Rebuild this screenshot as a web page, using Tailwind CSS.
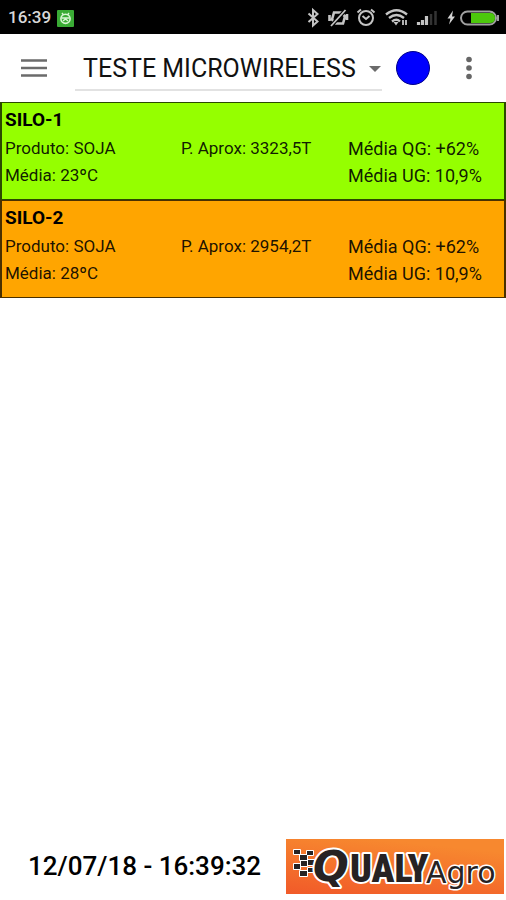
<!DOCTYPE html>
<html lang="pt-BR">
<head>
    <meta charset="UTF-8">
    <meta name="viewport" content="width=device-width, initial-scale=1.0">
    <title>QualyAgro - Silos</title>
    <script src="https://cdn.jsdelivr.net/npm/@tailwindcss/browser@4"></script>
</head>
<body class="bg-white text-black min-h-screen flex flex-col font-[Roboto,sans-serif]">
    <!-- Status bar -->
    <div class="bg-black h-[34px] flex items-center justify-between pl-2 pr-1.5 pt-0.5">
        <div class="flex items-center gap-1.5">
            <span class="text-[#d8d8d8] text-[17px] font-medium">16:39</span>
            <svg class="w-[17px] h-[17px]" viewBox="0 0 17 17" fill="none">
                <rect width="17" height="17" rx="1" fill="#3aab35"/>
                <circle cx="8.5" cy="8.8" r="4.6" stroke="#d9f5d4" stroke-width="1.6"/>
                <path d="M4.5 8h8M6 11l2.5-2 2.5 2M5 3l1.5 2M12 3l-1.5 2" stroke="#d9f5d4" stroke-width="1.4"/>
            </svg>
        </div>
        <svg class="w-[194px] h-[22px]" viewBox="306 7 194 22" fill="none" stroke="#c4c4c4">
            <!-- bluetooth -->
            <path d="M308.5 13.5l9 8-4.5 4V10l4.5 4-9 8" stroke-width="2"/>
            <!-- vibrate off -->
            <path d="M334 12.5h7l4 4-2 7h-7l-4-4zM329.5 15v6M347 14v6" stroke-width="2.6"/>
            <path d="M331 26l14.5-16" stroke="#000" stroke-width="4"/>
            <path d="M331 26l14.5-16" stroke-width="1.8"/>
            <!-- alarm -->
            <circle cx="366" cy="18" r="7" stroke-width="2"/>
            <path d="M362.5 16l3.5 3 3.5-3M357.5 12.5l3.5-3M374.5 12.5l-3.5-3" stroke-width="2"/>
            <!-- wifi -->
            <path d="M386 14.5q10.5-8.5 21 0M389 18q7.5-6 15 0M392 21.5q4.5-3.5 8 0" stroke-width="2.4"/>
            <path d="M393.5 22h5L396 25.5z" fill="#c4c4c4" stroke="none"/>
            <path d="M403 20v5M406 20v5" stroke-width="1.8"/>
            <!-- signal -->
            <path d="M418.5 25v-3M422.5 25v-5M426.5 25v-9" stroke-width="3.2"/>
            <path d="M431 25V14M435.5 25V11" stroke="#333" stroke-width="2.5"/>
            <!-- battery -->
            <path d="M453 10.500l-5.500 8h3l-1.500 6 6-8h-3z" fill="#d4d4d4" stroke="none"/>
            <rect x="461" y="11.5" width="35" height="13" rx="6.5" stroke="#a0a0a0" stroke-width="2"/>
            <path d="M471 13h19q5 0 5 5t-5 5h-19z" fill="#4cc80c" stroke="none"/>
            <path d="M498 15v6" stroke="#a0a0a0" stroke-width="2"/>
        </svg>
    </div>

    <!-- App bar -->
    <header class="h-[68px] flex items-center px-5">
        <button type="button" aria-label="Menu" class="shrink-0">
            <svg class="w-7 h-5" viewBox="0 0 28 20" stroke="#6b6b6b" stroke-width="2.4">
                <path d="M1 2.5h26M1 10h26M1 17.5h26"/>
            </svg>
        </button>
        <div class="relative flex-1 ml-[27px] border-b-2 border-[#e2e2e2]">
            <select aria-label="Unidade" class="appearance-none w-full h-11 pl-2 pr-6 pt-1 text-[25px] text-[#111111] bg-transparent">
                <option>TESTE MICROWIRELESS</option>
            </select>
            <svg class="absolute right-0 top-5 w-3.5 h-2 pointer-events-none" viewBox="0 0 14 8" fill="#6b6b6b">
                <path d="M1 1h12L7 7z"/>
            </svg>
        </div>
        <span class="shrink-0 ml-3.5 size-[34px] rounded-full bg-[#0000ff] border border-[#00008b]"></span>
        <button type="button" aria-label="Mais opções" class="shrink-0 ml-[27px] mr-[5px]">
            <svg class="w-6 h-6" viewBox="0 0 24 24" fill="#666666">
                <circle cx="12" cy="3.5" r="2.8"/>
                <circle cx="12" cy="12" r="2.8"/>
                <circle cx="12" cy="20.5" r="2.8"/>
            </svg>
        </button>
    </header>

    <!-- Silos -->
    <main class="flex-1">
        <section class="bg-[#95ff00] border-x-2 border-y border-[#2b4a00] h-[98px] px-[3px] pt-[3px]">
            <h2 class="text-[19px] leading-[27px] font-bold">SILO-1</h2>
            <div class="grid grid-cols-[176fr_167fr_153fr] pt-0.5 text-[17px] leading-[27px] text-black/90">
                <p>Produto: SOJA</p>
                <p>P. Aprox: 3323,5T</p>
                <p class="text-[18px]">Média QG: +62%</p>
                <p class="col-span-2">Média: 23ºC</p>
                <p class="text-[18px]">Média UG: 10,9%</p>
            </div>
        </section>
        <section class="bg-[#ffa500] border-x-2 border-y border-[#4a3000] h-[98px] px-[3px] pt-[3px]">
            <h2 class="text-[19px] leading-[27px] font-bold">SILO-2</h2>
            <div class="grid grid-cols-[176fr_167fr_153fr] pt-0.5 text-[17px] leading-[27px] text-black/90">
                <p>Produto: SOJA</p>
                <p>P. Aprox: 2954,2T</p>
                <p class="text-[18px]">Média QG: +62%</p>
                <p class="col-span-2">Média: 28ºC</p>
                <p class="text-[18px]">Média UG: 10,9%</p>
            </div>
        </section>
    </main>

    <!-- Footer -->
    <footer class="flex items-center justify-between pl-7 pr-0.5 pb-1.5">
        <time class="text-[26px] font-medium">12/07/18 - 16:39:32</time>
        <svg class="w-[218px] h-[55px]" viewBox="0 0 218 55" role="img" aria-label="QualyAgro">
            <defs>
                <linearGradient id="bg" x1="0" y1="1" x2="0.4" y2="0">
                    <stop offset="0" stop-color="#f15a29"/>
                    <stop offset="1" stop-color="#f7882f"/>
                </linearGradient>
            </defs>
            <rect width="218" height="55" fill="url(#bg)"/>
            <g stroke="#ffffff" stroke-width="4" fill="#262223" paint-order="stroke" stroke-linejoin="round">
                <path stroke-width="2" d="M8 11h6v4H8zM14 16h7v5h-7zM21 12h6v4h-6zM22 21h6v5h-6zM8 25h6v5H8zM15 22h6v5h-6zM14 32h7v5h-7zM22 29h6v4h-6z"/>
                <text x="27" y="42" font-size="42" font-weight="700" font-style="italic" font-family="DejaVu Sans, sans-serif">Q</text>
                <text x="64" y="43" font-size="38" font-weight="900" font-family="Roboto Condensed, sans-serif">UALY</text>
                <text x="140" y="44" font-size="30" stroke-width="3" font-family="DejaVu Sans, sans-serif">Agro</text>
            </g>
        </svg>
    </footer>
</body>
</html>
